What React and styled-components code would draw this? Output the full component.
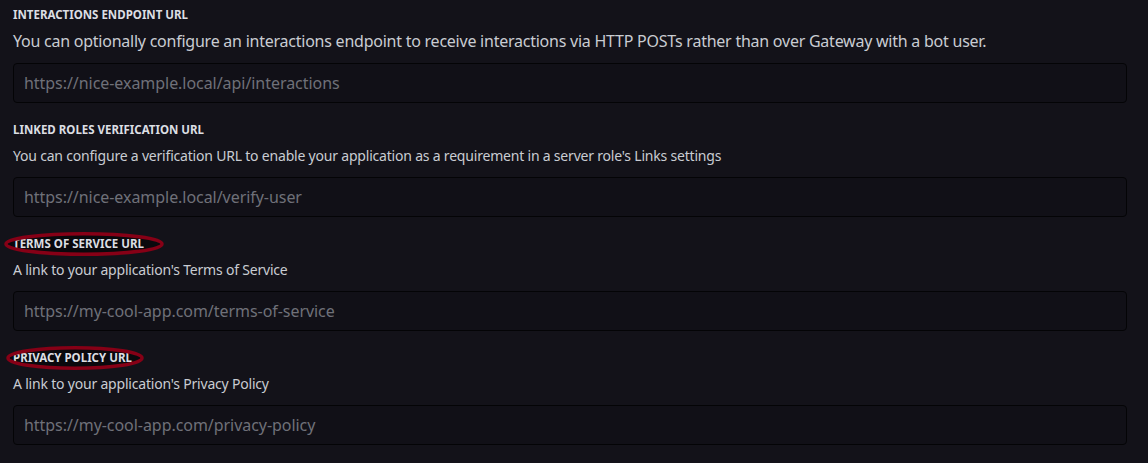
import React from 'react';
import styled, { createGlobalStyle } from 'styled-components';

const GlobalStyle = createGlobalStyle`
  html, body {
    margin: 0;
    padding: 0;
    background: #131219;
  }
  body {
    font-family: 'Noto Sans', 'Liberation Sans', sans-serif;
  }
`;

const Page = styled.main`
  display: flex;
  flex-direction: column;
  gap: 19px;
  padding: 7px 21px 0 13px;
  min-height: 463px;
  box-sizing: border-box;
  background: #131219;
`;

const Field = styled.section`
  display: flex;
  flex-direction: column;
`;

const Heading = styled.h2`
  position: relative;
  align-self: flex-start;
  margin: 0 0 ${(p) => (p.$large ? '7px' : '8px')};
  font-size: 11.5px;
  line-height: 16px;
  font-weight: 700;
  text-transform: uppercase;
  color: #dcdee3;
  span {
    position: relative;
    z-index: 1;
  }
`;

const Circle = styled.svg`
  position: absolute;
  left: ${(p) => p.$left}px;
  top: -4px;
  z-index: ${(p) => (p.$front ? 2 : 0)};
  overflow: visible;
  pointer-events: none;
`;

const Desc = styled.p`
  margin: 0 0 11px;
  font-size: ${(p) => (p.$large ? '16px' : '14px')};
  line-height: ${(p) => (p.$large ? '22px' : '20px')};
  letter-spacing: ${(p) => (p.$large ? '-0.24px' : '-0.2px')};
  color: #c9ccd2;
`;

const Input = styled.input`
  box-sizing: border-box;
  width: 100%;
  height: 40px;
  padding: 0 10px;
  background: #111017;
  border: 1px solid #040406;
  border-radius: 4px;
  font-family: inherit;
  font-size: 16px;
  letter-spacing: -0.05px;
  color: #dcdee3;
  outline: none;
  &::placeholder {
    color: #6f7079;
  }
`;

// red marker ellipse drawn round a heading: a dark fill behind the text, the stroke over it
const Marked = ({ children, width, left }) => {
  const rx = width / 2 - 2;
  const ellipse = (front) => (
    <Circle $front={front} $left={left} width={width} height={24} viewBox={`0 0 ${width} 24`}>
      <ellipse
        cx={width / 2}
        cy={12}
        rx={rx}
        ry={10.3}
        fill={front ? 'none' : '#0a090d'}
        stroke={front ? '#860016' : 'none'}
        strokeWidth={3.5}
      />
    </Circle>
  );
  return (
    <>
      {ellipse(false)}
      <span>{children}</span>
      {ellipse(true)}
    </>
  );
};

const fields = [
  {
    title: 'Interactions Endpoint URL',
    desc: 'You can optionally configure an interactions endpoint to receive interactions via HTTP POSTs rather than over Gateway with a bot user.',
    placeholder: 'https://nice-example.local/api/interactions',
    large: true,
  },
  {
    title: 'Linked Roles Verification URL',
    desc: "You can configure a verification URL to enable your application as a requirement in a server role's Links settings",
    placeholder: 'https://nice-example.local/verify-user',
  },
  {
    title: 'Terms of Service URL',
    desc: "A link to your application's Terms of Service",
    placeholder: 'https://my-cool-app.com/terms-of-service',
    mark: { width: 160, left: -9 },
  },
  {
    title: 'Privacy Policy URL',
    desc: "A link to your application's Privacy Policy",
    placeholder: 'https://my-cool-app.com/privacy-policy',
    mark: { width: 138, left: -7 },
  },
];

const App = () => (
  <>
    <GlobalStyle />
    <Page>
      {fields.map((f) => (
        <Field key={f.title}>
          <Heading $large={f.large}>
            {f.mark ? (
              <Marked width={f.mark.width} left={f.mark.left}>
                {f.title}
              </Marked>
            ) : (
              f.title
            )}
          </Heading>
          <Desc $large={f.large}>{f.desc}</Desc>
          <Input placeholder={f.placeholder} />
        </Field>
      ))}
    </Page>
  </>
);

export default App;
